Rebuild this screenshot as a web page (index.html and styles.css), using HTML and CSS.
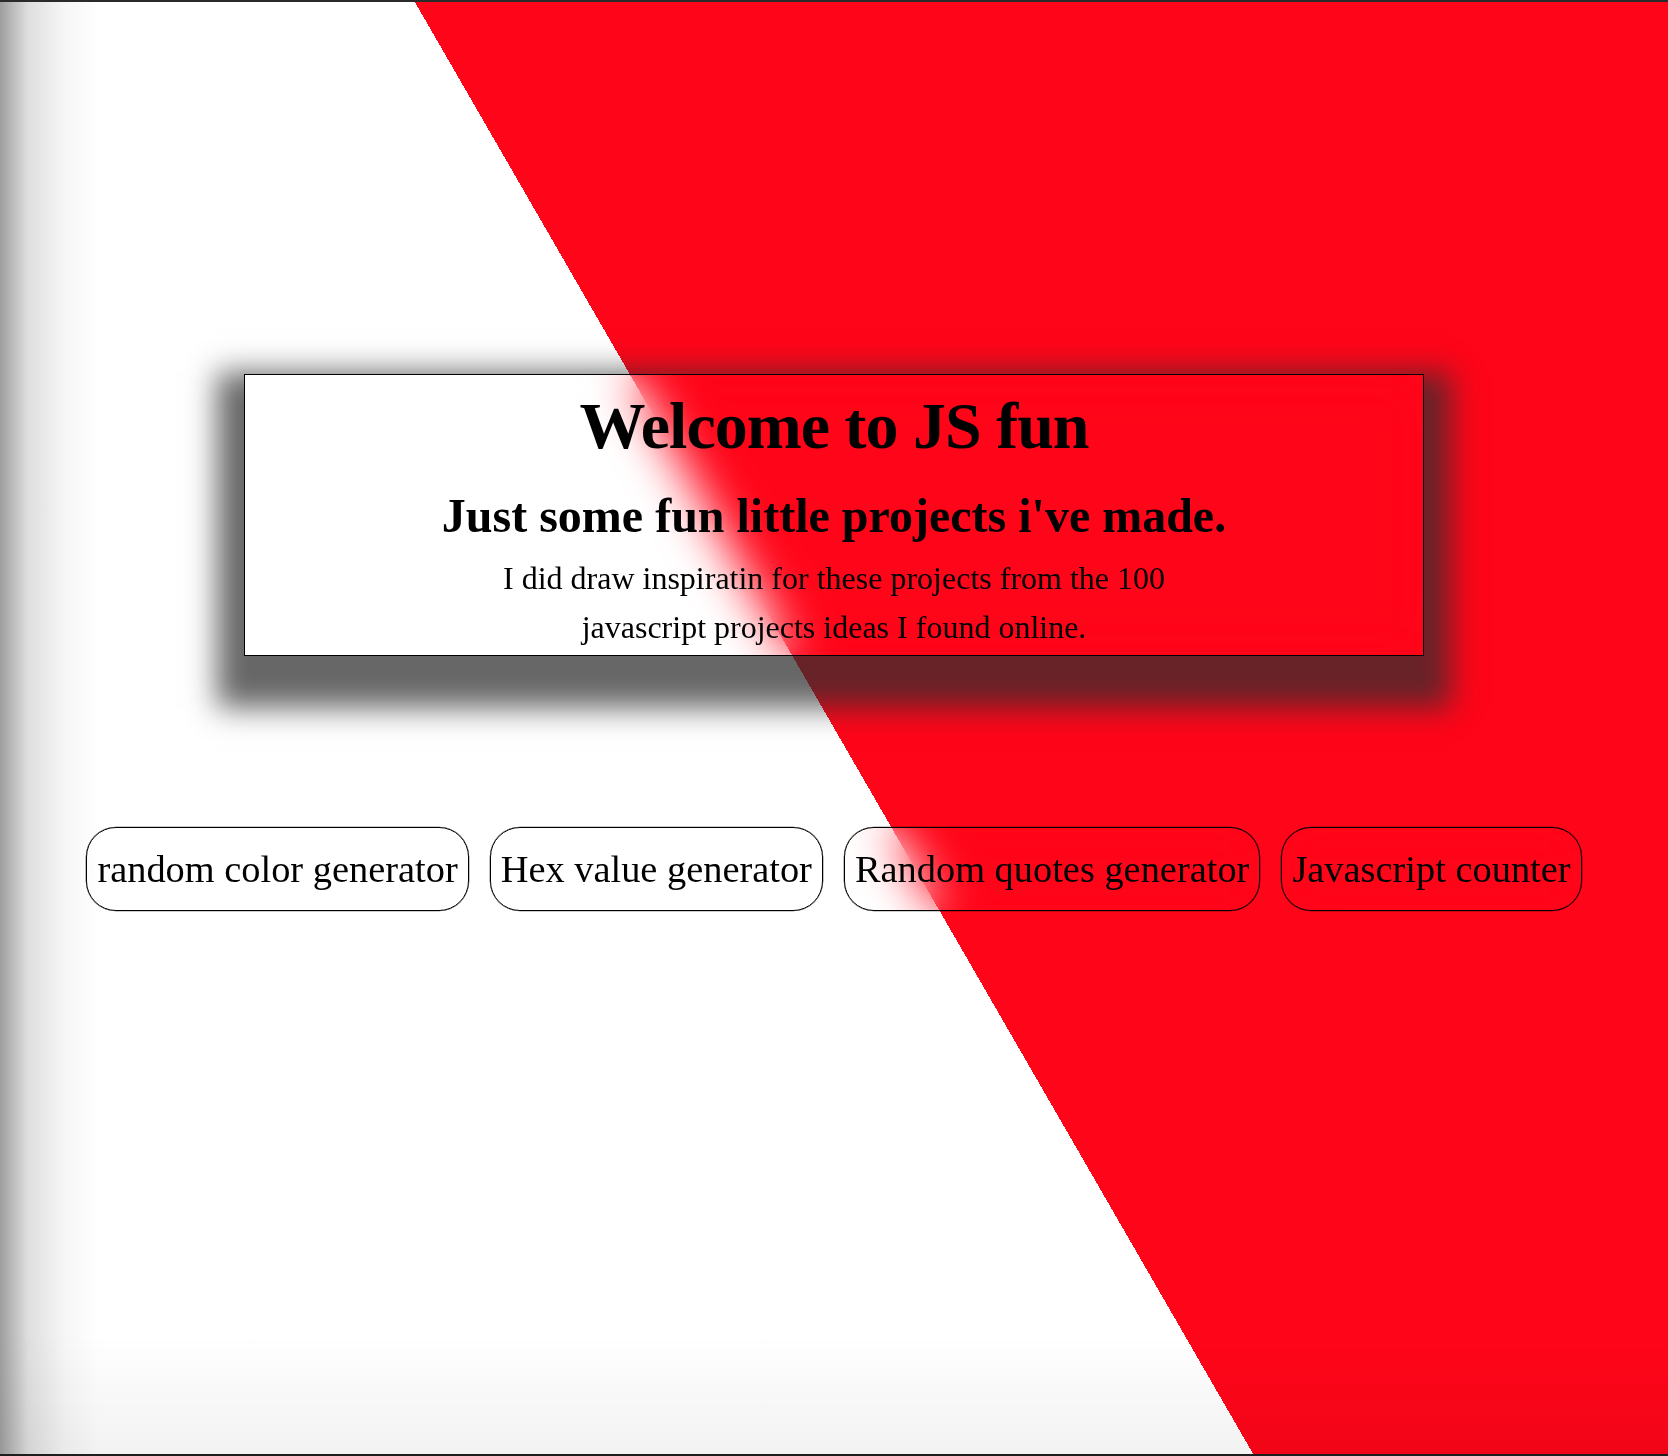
FILE: index.html
```html
<html>
   <head>
      <title>JS fun</title>
      <meta charset="utf-8">
      <link rel="stylesheet" href="styles.css">
   </head>

   <body>
      <div class="hero">
         <h1>Welcome to JS fun</h1>
         <h2>Just some fun little projects i've made.</h2>
         <p>I did draw inspiratin for these projects from the 100 javascript projects ideas I found online.</p>
      </div>
      <div class="projects">
         <button class="project">random color generator</button>
         <button class="project">Hex value generator</button>
         <button class="project">Random quotes generator</button>
         <button class="project">Javascript counter</button>
      </div>
   </body>
</html>
```

FILE: styles.css
```css
html {background: #747474;}
body {
   margin: 0;
   box-sizing: border-box;
   min-height: 1451px;
   padding-top: 372px;
   border-top: 2px solid #2a2a2a;
   border-bottom: 2px solid #1e1e1e;
   font-family: "Liberation Serif", "Times New Roman", serif;
   color: #000;
   background:
      linear-gradient(90deg, rgba(0,0,0,0.38) 0, rgba(0,0,0,0.13) 28px, rgba(0,0,0,0.035) 65px, rgba(0,0,0,0) 100px),
      linear-gradient(0deg, rgba(0,0,0,0.05) 0, rgba(0,0,0,0) 120px),
      linear-gradient(60deg, #fff 50%, rgb(255,5,25) 50%);
}
.hero {
   width: 1178px;
   margin: 0 auto;
   border: 1px solid #000;
   padding: 11px 0 3px;
   text-align: center;
   backdrop-filter: blur(25px);
   box-shadow: 0 25px 28px 27px rgba(46,46,46,0.73);
}
.hero h1 {font-size: 66px; line-height: 80px; letter-spacing: -1px; margin: 0;}
.hero h2 {font-size: 48px; line-height: 56px; margin: 22px 0 0;}
.hero p {font-size: 32px; line-height: 49px; max-width: 700px; margin: 10px auto 0;}

.projects {display: flex; justify-content: center; gap: 21px; margin-top: 171px;}
.project {
   font-family: "Liberation Serif", "Times New Roman", serif;
   font-size: 38.4px;
   color: #000;
   height: 84px;
   padding: 0 10px;
   background: transparent;
   border: 1px solid #000;
   border-radius: 30px;
   box-shadow: 0 0 0.6px 0.3px rgba(0,0,0,0.8);
   backdrop-filter: blur(25px);
}
```
